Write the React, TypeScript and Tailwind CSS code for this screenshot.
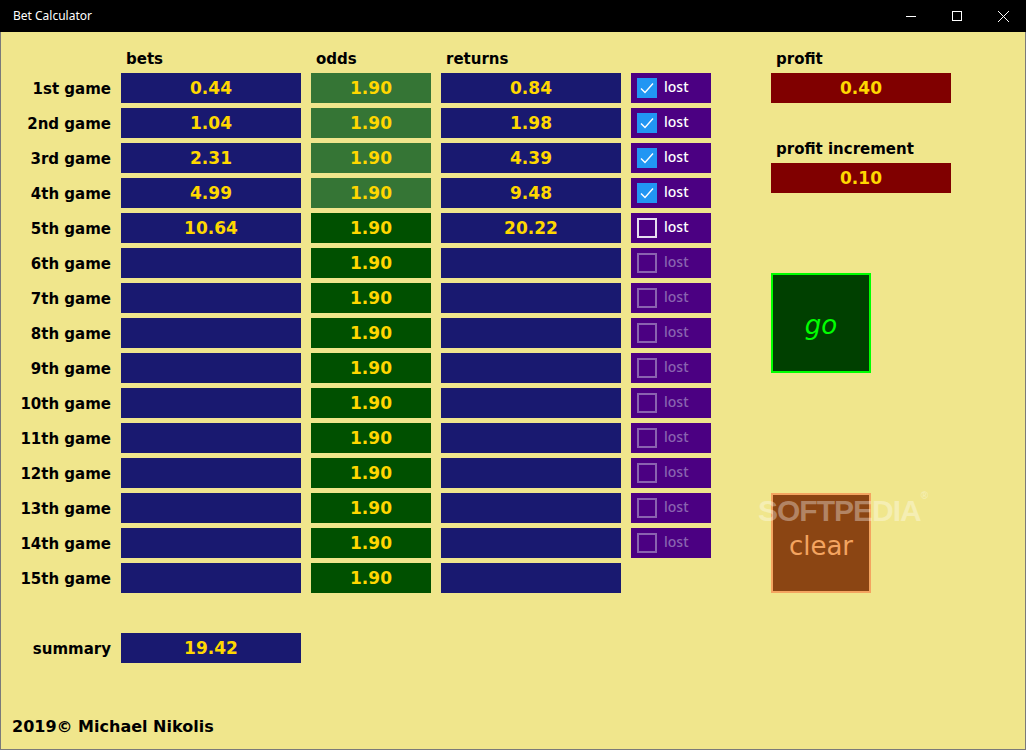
import React from "react";

type Row = {
  bet: string;
  ret: string;
  lost: boolean;
  locked: boolean;
};

const ordinals = ["1st", "2nd", "3rd", "4th", "5th", "6th", "7th", "8th", "9th", "10th", "11th", "12th", "13th", "14th", "15th"];

const rows: Row[] = ordinals.map((_, i) => {
  const filled: [string, string][] = [
    ["0.44", "0.84"],
    ["1.04", "1.98"],
    ["2.31", "4.39"],
    ["4.99", "9.48"],
    ["10.64", "20.22"],
  ];
  const f = filled[i];
  return {
    bet: f ? f[0] : "",
    ret: f ? f[1] : "",
    lost: i < 4,
    locked: i < 4,
  };
});

const comic = "font-['Comic_Sans_MS','DejaVu_Sans',sans-serif]";

function LostBox({ checked, enabled }: { checked: boolean; enabled: boolean }) {
  return (
    <div className="h-[30px] bg-[#4b0082] flex items-center pl-[6px] gap-[7px]">
      {checked ? (
        <div className="w-[20px] h-[20px] bg-[#2196f3] flex items-center justify-center">
          <svg width="16" height="16" viewBox="0 0 16 16">
            <path d="M2 8.5 L6 12.5 L14 3.5" fill="none" stroke="white" strokeWidth="1.4" />
          </svg>
        </div>
      ) : (
        <div
          className={`w-[20px] h-[20px] border-2 ${enabled ? "border-[#e6def0]" : "border-[#8a62b0]"}`}
        />
      )}
      <span
        className={`font-['Noto_Sans',sans-serif] text-[14px] font-medium leading-none pb-[2px] ${
          enabled ? "text-white" : "text-[#8a64b0]"
        }`}
      >
        lost
      </span>
    </div>
  );
}

function ValueCell({ value, bg }: { value: string; bg: string }) {
  return (
    <div className={`h-[30px] ${bg} flex items-center justify-center text-[#ffd700] text-[17px] font-bold pt-[1px]`}>
      {value}
    </div>
  );
}

export default function App() {
  return (
    <div className="w-[1026px] h-[750px] flex flex-col overflow-hidden">
      <div className="h-[32px] bg-black flex items-center justify-between shrink-0">
        <span className="pl-[13px] text-white text-[12px] font-['Noto_Sans',sans-serif]">Bet Calculator</span>
        <div className="flex h-full">
          <div className="w-[46px] h-full flex items-center justify-center">
            <svg width="10" height="10" viewBox="0 0 10 10">
              <line x1="0" y1="5.5" x2="10" y2="5.5" stroke="white" strokeWidth="1" />
            </svg>
          </div>
          <div className="w-[46px] h-full flex items-center justify-center">
            <svg width="10" height="10" viewBox="0 0 10 10">
              <rect x="0.5" y="0.5" width="9" height="9" fill="none" stroke="white" strokeWidth="1" />
            </svg>
          </div>
          <div className="w-[46px] h-full flex items-center justify-center">
            <svg width="11" height="11" viewBox="0 0 11 11">
              <line x1="0" y1="0" x2="11" y2="11" stroke="white" strokeWidth="1" />
              <line x1="11" y1="0" x2="0" y2="11" stroke="white" strokeWidth="1" />
            </svg>
          </div>
        </div>
      </div>

      <div className={`relative flex-1 bg-[#f0e68c] border-x border-b border-[#7a7a7a] flex flex-col text-black ${comic}`}>
        <div className="flex gap-[60px] pt-[16px]">
          {/* game table */}
          <div className="grid grid-cols-[110px_180px_120px_180px_80px] gap-x-[10px] gap-y-[5px] auto-rows-[30px] [grid-template-rows:20px]">
            <div />
            <div className="h-[20px] pl-[5px] text-[15px] font-bold leading-[22px]">bets</div>
            <div className="h-[20px] pl-[5px] text-[15px] font-bold leading-[22px]">odds</div>
            <div className="h-[20px] pl-[5px] text-[15px] font-bold leading-[22px]">returns</div>
            <div />
            {rows.map((r, i) => (
              <React.Fragment key={i}>
                <div className="h-[30px] flex items-center justify-end text-[15px] font-bold pt-[2px]">
                  {ordinals[i]} game
                </div>
                <ValueCell value={r.bet} bg="bg-[#191970]" />
                <ValueCell value="1.90" bg={r.locked ? "bg-[#357535]" : "bg-[#005000]"} />
                <ValueCell value={r.ret} bg="bg-[#191970]" />
                {i < 14 ? <LostBox checked={r.lost} enabled={i < 5} /> : <div />}
              </React.Fragment>
            ))}
          </div>

          {/* profit panel */}
          <div className="flex flex-col w-[180px]">
            <div className="h-[20px] pl-[5px] text-[15px] font-bold leading-[22px]">profit</div>
            <div className="mt-[5px]">
              <ValueCell value="0.40" bg="bg-[#800000]" />
            </div>
            <div className="mt-[35px] h-[20px] pl-[5px] text-[15px] font-bold leading-[22px]">profit increment</div>
            <div className="mt-[5px]">
              <ValueCell value="0.10" bg="bg-[#800000]" />
            </div>
            <button className="mt-[80px] w-[100px] h-[100px] bg-[#004000] border-2 border-[#00ff00] text-[#00ff00] text-[26px] italic flex items-center justify-center pt-[4px]">
              go
            </button>
            <button className="mt-[120px] w-[100px] h-[100px] bg-[#8b4513] border-2 border-[#f4a460] text-[#f4a460] text-[26px] flex items-center justify-center pt-[6px]">
              clear
            </button>
          </div>
        </div>

        <div className="grid grid-cols-[110px_180px] gap-x-[10px] mt-[40px]">
          <div className="h-[30px] flex items-center justify-end text-[15px] font-bold pt-[2px]">summary</div>
          <ValueCell value="19.42" bg="bg-[#191970]" />
        </div>

        <div className="mt-auto pl-[11px] pb-[10px] text-[16px] font-bold leading-[24px]">2019© Michael Nikolis</div>

        <div className="absolute left-[757px] top-[456px] text-white/35 text-[30px] font-bold font-['Liberation_Sans',sans-serif] tracking-[-1px] pointer-events-none">
          SOFTPEDIA<span className="text-[10px] align-top">®</span>
        </div>
      </div>
    </div>
  );
}
